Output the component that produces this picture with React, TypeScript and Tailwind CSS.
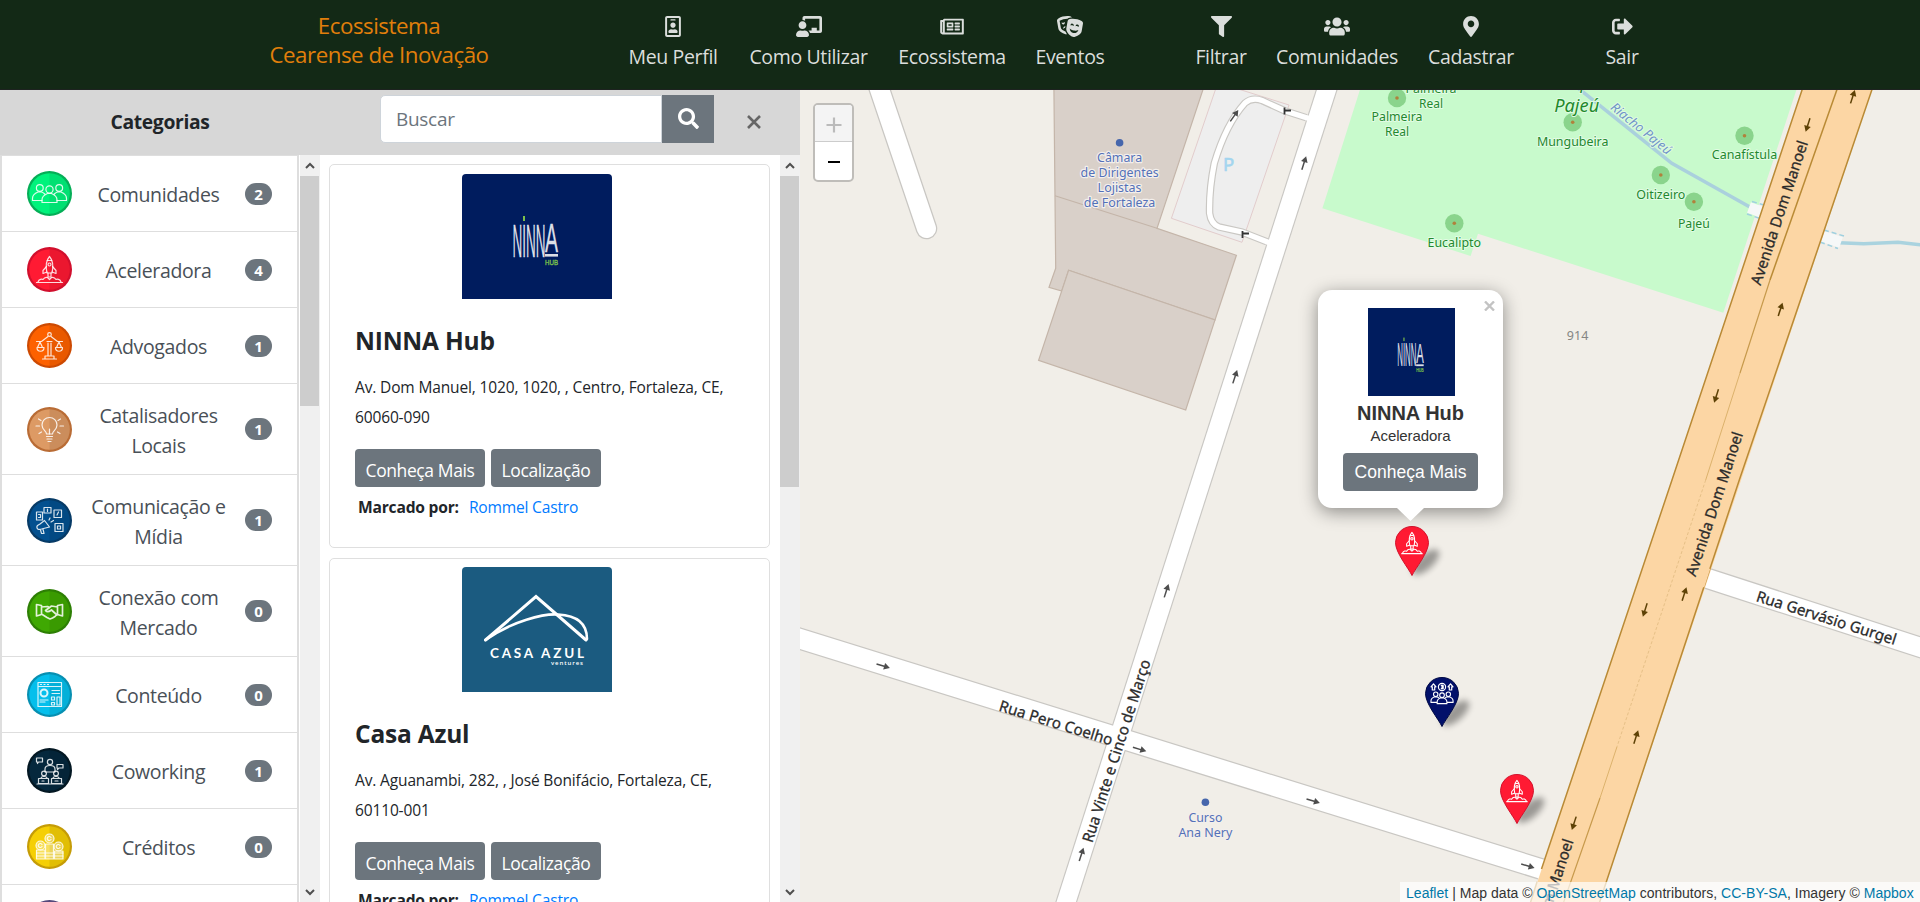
import type { ComponentType, ReactNode } from 'react';
import {
  FaChalkboardTeacher,
  FaFilter,
  FaMapMarkerAlt,
  FaRegIdBadge,
  FaRegNewspaper,
  FaSearch,
  FaSignOutAlt,
  FaTheaterMasks,
  FaUsers,
} from 'react-icons/fa';

type NavItem = { label: string; icon: ComponentType<{ className?: string }>; size: string; box: string };

const navItems: NavItem[] = [
  { label: 'Meu Perfil', icon: FaRegIdBadge, size: 'w-[16px]', box: 'w-[120px]' },
  { label: 'Como Utilizar', icon: FaChalkboardTeacher, size: 'w-[26px]', box: 'w-[151px]' },
  { label: 'Ecossistema', icon: FaRegNewspaper, size: 'w-[24px]', box: 'w-[136px]' },
  { label: 'Eventos', icon: FaTheaterMasks, size: 'w-[26px]', box: 'w-[100px]' },
  { label: 'Filtrar', icon: FaFilter, size: 'w-[21px]', box: 'ml-[61px] w-[80px]' },
  { label: 'Comunidades', icon: FaUsers, size: 'w-[26px]', box: 'w-[152px]' },
  { label: 'Cadastrar', icon: FaMapMarkerAlt, size: 'w-[16px]', box: 'w-[116px]' },
  { label: 'Sair', icon: FaSignOutAlt, size: 'w-[21px]', box: 'ml-[61px] w-[64px]' },
];

function Header() {
  return (
    <header className="flex h-[90px] shrink-0 border-b border-[#1d2320] bg-[#132916] pl-[269px]">
      <div className="flex w-[220px] flex-col items-center pt-[11px] text-[22.300px] leading-[29px] tracking-[-0.470px] text-[#e17f0b]">
        <span>Ecossistema</span>
        <span className="whitespace-nowrap">Cearense de Inovação</span>
      </div>
      <nav className="flex pl-[124px]">
        {navItems.map(({ label, icon: Icon, size, box }) => (
          <a key={label} className={`flex flex-col items-center pt-4 text-[#dbdedc] ${box}`}>
            <Icon className={`h-[21px] ${size}`} />
            <span className="mt-[5px] whitespace-nowrap text-[19.5px] leading-[30px] tracking-[-0.35px]">{label}</span>
          </a>
        ))}
      </nav>
    </header>
  );
}

function Disc({ id, fill, ring, children }: { id: string; fill: string; ring: string; children?: ReactNode }) {
  return (
    <svg viewBox="0 0 45 45" className="h-[45px] w-[45px] shrink-0" fill="none" stroke="#fff" strokeWidth="1.200" strokeOpacity="0.85" strokeLinejoin="round" strokeLinecap="round">
      <clipPath id={id}>
        <rect x="22.5" y="0" width="22.5" height="45" />
      </clipPath>
      <circle cx="22.5" cy="22.5" r="22.5" fill={ring} stroke="none" />
      <circle cx="22.5" cy="22.5" r="20.3" fill={fill} stroke="none" />
      <circle cx="22.5" cy="22.5" r="20.3" fill="#000" fillOpacity="0.08" stroke="none" clipPath={`url(#${id})`} />
      {children}
    </svg>
  );
}

function PeopleGlyph() {
  return (
    <>
      <circle cx="12.8" cy="17" r="3.4" />
      <circle cx="32.2" cy="17" r="3.4" />
      <path d="M15 29.500H5.500v-2c0-3.500 3-5.500 5.500-6.500h3.500c1.500 .5 2.500 1.200 3.200 2" />
      <path d="M30 29.500h9.500v-2c0-3.500-3-5.500-5.500-6.500h-3.500c-1.500 .5-2.500 1.200-3.200 2" />
      <circle cx="22.500" cy="18.500" r="3.600" />
      <path d="M15 31.500v-2.500c0-3.500 3-5.500 5.500-6.500h4c2.500 1 5.500 3 5.500 6.500v2.500z" />
    </>
  );
}

function RocketGlyph() {
  return (
    <>
      <path d="M22.500 9.500c-3.500 4-4 10-2.500 16.500h5c1.500-6.500 1-12.500-2.500-16.500z" />
      <circle cx="22.500" cy="17.500" r="1.500" />
      <path d="M19.500 19.500l-3.500 4v3l4-1.500M25.500 19.500l3.500 4v3l-4-1.500M21 26v4h3v-4M20.200 13.500h4.600" />
      <path d="M9.500 35.500h26M11 35c1-3 4-3 5-2.500 1.500-2.500 3-2.500 4.500-2l2 2 2-2c1.500-.5 3-.5 4.500 2 1-.5 4-.5 5 2.500" />
    </>
  );
}

const categories: { name: string; count: number; tall?: boolean; icon: ReactNode }[] = [
  { name: 'Comunidades', count: 2, icon: <Disc id="c1" fill="#00f37c" ring="#05ae57"><PeopleGlyph /></Disc> },
  { name: 'Aceleradora', count: 4, icon: <Disc id="c2" fill="#ff1a33" ring="#d10f2d"><RocketGlyph /></Disc> },
  {
    name: 'Advogados',
    count: 1,
    icon: (
      <Disc id="c3" fill="#fd6100" ring="#cd4a02">
        <circle cx="22.500" cy="11.500" r="1.800" />
        <path d="M9.500 18.500h5l6.500-5M35.500 18.500h-5l-6.500-5M20 18.500h5M21 20v12.500M24 20v12.500M18 33h9v3h-9zM15.500 36h14" />
        <path d="M13 19l-2.500 5.500M13 19l2.500 5.500M10 24.500h7c0 5-7 5-7 0zM32 19l-2.500 5.500M32 19l2.500 5.500M28.500 24.500h7c0 5-7 5-7 0z" />
      </Disc>
    ),
  },
  {
    name: 'Catalisadores Locais',
    count: 1,
    tall: true,
    icon: (
      <Disc id="c4" fill="#dd9a64" ring="#b96c35">
        <path d="M19.500 27c0-3-4.500-4-4.500-9a7.500 7.500 0 0 1 15 0c0 5-4.500 6-4.500 9z" />
        <path d="M22.500 22v5M19.500 29.500h6M20 32h5M21 34.500h3M9 19h3.500M33 19h3.500M11.500 12l2.500 1.500M33.500 12l-2.500 1.500M12 26.500l2.500-1.500M33 26.500l-2.500-1.500" />
      </Disc>
    ),
  },
  {
    name: 'Comunicação e Mídia',
    count: 1,
    tall: true,
    icon: (
      <Disc id="c5" fill="#03508f" ring="#063a66">
        <path d="M9.500 14h6v8h-6zM17 9.500h7v5.500h-7zM27 12h7.500v7.500h-7.500zM28 25.500h8v8h-8z" />
        <path d="M11.500 16.500h2v3h-2M20.500 11v2.500M31.500 14l-1.500 3M30.500 28h3v3h-3z" />
        <path d="M17.500 22.500l5 6.500-8 2-3 .5a2.500 2.500 0 0 1-1-4l2.500-1.500zM13.500 32l1 3.500h2.500l-1-4.500M22 22l1-2M24 24l2.500-1.500" />
      </Disc>
    ),
  },
  {
    name: 'Conexão com Mercado',
    count: 0,
    tall: true,
    icon: (
      <Disc id="c6" fill="#3fa802" ring="#2d7f04">
        <path strokeWidth="1.700" d="M9.500 15.500l5 1v9l-5 1.500zM35.500 15.500l-5 1v9l5 1.500zM14.500 18l6-.5 2 1M30.500 18l-6-1-6 4.500c1.500 2 4 1 6-.5l5.500 5M14.500 25l5.500 3.500 3 1.500 2.500-1 2.500-1.500 2.500-2.500" />
      </Disc>
    ),
  },
  {
    name: 'Conteúdo',
    count: 0,
    icon: (
      <Disc id="c7" fill="#05bfec" ring="#078fb1">
        <path d="M11 10.500h23.500v24h-23.500zM11 14.500h23.500M13.500 12.500h1M17 12.500h1M20.500 12.500h1M25 18.500h7.500M25 21.500h7.500M13 28h8M13 30h5M24.500 25h3v3h-3zM30 25h3v8h-3zM24.500 30.500h3v2.500h-3z" />
        <circle cx="17" cy="21" r="3.500" strokeWidth="2" />
      </Disc>
    ),
  },
  {
    name: 'Coworking',
    count: 1,
    icon: (
      <Disc id="c8" fill="#05283d" ring="#031722">
        <path d="M9.500 10h6v4h-4l-1 1.500v-1.500h-1zM30 16.500h6v3.500h-4l-1.500 1.500v-1.500h-.5zM18 24v-3c0-2 2-3.500 5-3.500s5 1.500 5 3.500v3z" />
        <circle cx="23" cy="14" r="2.600" />
        <circle cx="17" cy="25.500" r="2.400" />
        <circle cx="29" cy="25.500" r="2.400" />
        <path d="M11.500 35.500v-5h10v5zM24.500 35.500v-5h10v5zM10 36h26M14 30c.500-2 5.500-2 6 0M26 30c.500-2 5.500-2 6 0M15 33h2M28 33h3" />
      </Disc>
    ),
  },
  {
    name: 'Créditos',
    count: 0,
    icon: (
      <Disc id="c9" fill="#f5cf05" ring="#c59c07">
        <g fill="#fff" fillOpacity="0.35">
          <circle cx="22.500" cy="14.500" r="4.500" />
          <circle cx="13.500" cy="21.500" r="4.500" />
          <circle cx="31.500" cy="22.500" r="4.500" />
          <path d="M18.500 20h8v15h-8zM9.500 26h8.500v9h-8.500zM27.500 27h8.500v8h-8.500z" />
        </g>
        <path d="M9.500 29h26.500M9.500 32h26.500M24 13.500a2 2 0 1 0 0 2M15 20.500a2 2 0 1 0 0 2M33 21.500a2 2 0 1 0 0 2" />
      </Disc>
    ),
  },
];

function Chevron({ down }: { down?: boolean }) {
  return (
    <svg viewBox="0 0 10 7" className="h-[7px] w-[10px] shrink-0" fill="none" stroke="#505050" strokeWidth="2">
      <path d={down ? 'M1 1l4 4 4-4' : 'M1 6l4-4 4 4'} />
    </svg>
  );
}

function Scrollbar({ thumb }: { thumb: string }) {
  return (
    <div className="flex w-5 shrink-0 flex-col items-center bg-[#f0f0f0]">
      <div className="flex h-[21px] items-center pr-px">
        <Chevron />
      </div>
      <div className={`w-[19px] self-start bg-[#cdcdcd] ${thumb}`} />
      <div className="mt-auto flex h-[20px] items-center pr-px">
        <Chevron down />
      </div>
    </div>
  );
}

function Sidebar() {
  return (
    <aside className="flex w-[320px] shrink-0 flex-col">
      <div className="flex h-[65px] shrink-0 items-center justify-center bg-[#d7d7d7] text-[19.300px] font-bold tracking-[-0.350px] text-[#212529]">
        Categorias
      </div>
      <div className="flex min-h-0 flex-1">
        <ul className="w-[299px] overflow-hidden border-x-2 border-t border-[#dedede]">
          {categories.map((c) => (
            <li key={c.name} className={`flex items-center border-b border-[#dedede] pl-[25px] ${c.tall ? 'h-[91px]' : 'h-[76px]'}`}>
              {c.icon}
              <span className="mt-[3px] ml-[14px] w-[145px] px-1 text-center text-[19.5px] leading-[30px] tracking-[-0.35px] text-[#495057]">{c.name}</span>
              <span className="ml-[14px] flex h-[22px] w-[27px] items-center justify-center rounded-full bg-[#6c757d] pt-px text-[15px] font-bold text-white">
                {c.count}
              </span>
            </li>
          ))}
          <li className="flex h-[76px] items-start pt-[15px] pl-[25px]">
            <Disc id="c10" fill="#6d5f95" ring="#55487b" />
          </li>
        </ul>
        <div className="flex pl-px">
          <Scrollbar thumb="h-[230px]" />
        </div>
      </div>
    </aside>
  );
}

function NinnaLogo({ className }: { className: string }) {
  return (
    <svg viewBox="0 0 150 125" preserveAspectRatio="none" className={className}>
      <rect width="150" height="125" fill="#001c5e" />
      <g fill="#dcdfe6" stroke="#dcdfe6" strokeWidth="0.300" fontFamily="Liberation Sans, sans-serif">
        <text x="50.500" y="83" fontSize="47" textLength="33" lengthAdjust="spacingAndGlyphs">NINN</text>
        <text x="83" y="77.500" fontSize="40" textLength="13" lengthAdjust="spacingAndGlyphs">A</text>
      </g>
      <rect x="83" y="80" width="13" height="2.600" fill="#dcdfe6" />
      <rect x="61" y="42" width="2" height="5" fill="#7cc04b" />
      <text x="83" y="91" fontSize="6.500" fontFamily="Liberation Sans, sans-serif" textLength="13" lengthAdjust="spacingAndGlyphs" fill="#7cc04b" stroke="#7cc04b" strokeWidth="0.300">HUB</text>
    </svg>
  );
}

function CasaAzulLogo({ className }: { className: string }) {
  return (
    <svg viewBox="0 0 150 125" preserveAspectRatio="none" className={className}>
      <rect width="150" height="125" fill="#1b5b80" />
      <path d="M23.500 73L74 29.500L124 73" fill="none" stroke="#fff" strokeWidth="3" strokeLinecap="round" strokeLinejoin="miter" />
      <path d="M23.500 73C50 54 82 46.500 96 47.500C116 48.500 125 57 125 72" fill="none" stroke="#fff" strokeWidth="2.600" strokeLinecap="round" />
      <text x="28" y="91" fontSize="13.500" fontWeight="700" fontFamily="Lato, sans-serif" textLength="94" fill="#fff">CASA AZUL</text>
      <text x="89" y="97.500" fontSize="6" fontWeight="600" fontFamily="Open Sans, sans-serif" textLength="32" fill="#fff">ventures</text>
    </svg>
  );
}

const cards = [
  { name: 'NINNA Hub', address: 'Av. Dom Manuel, 1020, 1020, , Centro, Fortaleza, CE, 60060-090', logo: NinnaLogo, pad: 'pt-[9px]' },
  { name: 'Casa Azul', address: 'Av. Aguanambi, 282, , José Bonifácio, Fortaleza, CE, 60110-001', logo: CasaAzulLogo, pad: 'pt-[8px]' },
];

function Results() {
  return (
    <section className="flex w-[480px] shrink-0 flex-col">
      <div className="flex h-[65px] shrink-0 items-start bg-[#d7d7d7] pt-[5px] pl-[60px]">
        <div className="flex h-[48px] w-[282px] items-center rounded-l-[5px] border border-[#ced4da] bg-white pt-px pl-[15px] text-[19px] tracking-[-0.3px] text-[#6c757d]">
          Buscar
        </div>
        <button className="flex h-12 w-[52px] items-center justify-center bg-[#6c757d] text-white">
          <FaSearch className="mb-px h-[21px] w-[21px]" />
        </button>
        <button className="mt-[20px] ml-[33px]">
          <svg viewBox="0 0 14 14" className="h-[14px] w-[14px]" stroke="#666" strokeWidth="2.600">
            <path d="M1 1l12 12M13 1L1 13" />
          </svg>
        </button>
      </div>
      <div className="flex min-h-0 flex-1">
        <div className="flex min-w-0 flex-1 flex-col gap-[10px] overflow-hidden bg-white pt-[9px] pr-[10px] pl-[9px] text-[#212529]">
          {cards.map(({ name, address, logo: Logo, pad }) => (
            <article key={name} className={`h-[384px] shrink-0 rounded-[5px] border border-[#dfdfdf] ${pad}`}>
              <Logo className="ml-[132px] h-[125px] w-[150px] rounded-t-[4px]" />
              <div className="pl-[25px]">
                <h2 className="mt-[24px] text-[24.500px] leading-[36px] font-bold tracking-[-0.2px]">{name}</h2>
                <p className="mt-[13px] w-[400px] text-[15.500px] leading-[30px] tracking-[-0.140px]">{address}</p>
                <div className="mt-[17px] flex gap-[6px] text-[17.500px] tracking-[-0.4px] text-white">
                  <button className="h-[38px] w-[130px] rounded-[4px] bg-[#6c757d] pt-[4px]">Conheça Mais</button>
                  <button className="h-[38px] w-[110px] rounded-[4px] bg-[#6c757d] pt-[4px]">Localização</button>
                </div>
                <p className="mt-[8px] flex gap-[10px] pl-[3px] text-[15.600px] leading-[24px] tracking-[-0.200px]">
                  <b>Marcado por:</b>
                  <a className="text-[#007bff]">Rommel Castro</a>
                </p>
              </div>
            </article>
          ))}
        </div>
        <Scrollbar thumb="h-[311px]" />
      </div>
    </section>
  );
}

const trees: [number, number][] = [
  [1397, 98], [1572.7, 122.3], [1744.5, 135.7], [1660.8, 175], [1693.9, 201.7], [1454.3, 223.3],
];

const treeLabels: [number, number, string, number][] = [
  [1431, 92.5, 'Palmeira', 51], [1431, 108, 'Real', 24], [1397, 121, 'Palmeira', 51], [1397, 136, 'Real', 24],
  [1572.7, 146, 'Mungubeira', 71.5], [1744.5, 159, 'Canafístula', 65.5], [1660.8, 198.5, 'Oitizeiro', 49],
  [1693.9, 227.5, 'Pajeú', 32], [1454.3, 247, 'Eucalipto', 53.5],
];

const poiLabels: [number, number, string, number][] = [
  [1119.6, 162, 'Câmara', 45], [1119.6, 177, 'de Dirigentes', 78], [1119.6, 192, 'Lojistas', 44],
  [1119.6, 207, 'de Fortaleza', 71.5], [1205.4, 822, 'Curso', 34], [1205.4, 837, 'Ana Nery', 54],
];

const streetArrows: [number, number, number][] = [
  [1304, 163, -72], [1235, 376.7, -72], [1166.4, 590.7, -72], [1081.4, 854.3, -72], [1329.5, 83, -72],
  [883.2, 666, 17], [1139.6, 749.3, 17], [1313.2, 801, 17], [1527.9, 866, 17], [1234.3, 115.7, -55],
];

const avenueArrows: [number, number, number][] = [
  [1807.8, 125, 108], [1716.3, 396, 108], [1645, 610, 108], [1574, 823.3, 108],
  [1852.7, 96.7, -72], [1780.4, 309.3, -72], [1684.3, 594, -72], [1636, 737, -72],
];

const streetNames: [number, number, number, string, number][] = [
  [1056, 723, 17.2, 'Rua Pero Coelho', 118],
  [1116.5, 751, -72.2, 'Rua Vinte e Cinco de Março', 191],
  [1826.5, 618, 17.6, 'Rua Gervásio Gurgel', 146],
  [1779.5, 212.7, -71.6, 'Avenida Dom Manoel', 151],
  [1714.5, 504, -71.6, 'Avenida Dom Manoel', 151],
  [1545, 911, -71.6, 'Avenida Dom Manoel', 151],
];

function Arrow({ x, y, angle, color }: { x: number; y: number; angle: number; color: string }) {
  return (
    <g transform={`translate(${x} ${y}) rotate(${angle})`}>
      <path d="M-7 0H2" stroke={color} strokeWidth="1.500" />
      <path d="M1-3.400L7 0L1 3.400z" fill={color} />
    </g>
  );
}

function Pin({ x, y, fill, edge, children }: { x: number; y: number; fill: string; edge: string; children: ReactNode }) {
  return (
    <g transform={`translate(${x} ${y})`}>
      <ellipse cx="13.500" cy="-14" rx="17" ry="7.500" transform="rotate(-42 13.500 -14)" fill="#000" opacity="0.36" filter="url(#soft)" />
      <path d="M0-.5C-3.500-8-16.500-23-16.500-33.500a16.500 16 0 0 1 33 0C16.500-23 3.500-8 0-.5z" fill={fill} stroke={edge} strokeWidth="1" />
      {children}
    </g>
  );
}

function RocketPinGlyph() {
  return (
    <g transform="translate(-18.500 -51.500) scale(0.82)" fill="none" stroke="#fff" strokeWidth="1.300" strokeLinejoin="round">
      <RocketGlyph />
    </g>
  );
}

function MapCanvas() {
  return (
    <svg viewBox="800 90 1120 812" className="block h-[812px] w-[1120px]" fill="none">
      <defs>
        <filter id="soft" x="-50%" y="-50%" width="200%" height="200%">
          <feGaussianBlur stdDeviation="3.200" />
        </filter>
      </defs>
      <rect x="800" y="90" width="1120" height="812" fill="#f1eee8" />

      <g fill="#d9d0c9" stroke="#c4b5a9" strokeWidth="1.200">
        <path d="M1053.900 88L1055.700 268.300L1049 287.300L1061.800 291L1068.600 270.300L1215 320L1236.400 255.300L1157 228.300L1203.500 88z" />
        <path d="M1055 195.700L1157 228.300" />
        <path d="M1068.600 270.300L1215 320L1185.700 410L1038.600 360.300z" />
      </g>

      <path d="M1216 88L1171.400 218.300L1242 242.300L1289 105L1235 88z" fill="#eee" stroke="#e2cccc" />

      <path d="M1360.500 88L1322.400 208.300L1470.600 256L1478 233.700L1723.300 312.700L1797 88z" fill="#c8facc" />

      <path d="M1578 88L1671.800 163.300L1749.400 206.700" stroke="#aad0dd" strokeWidth="3.500" />
      <path d="M1839 242.700L1863.700 243.700L1898 242.300L1922 245" stroke="#aad3df" strokeWidth="3.500" />
      <path d="M1749 207.500L1764 213M1822 236L1841 242.500" stroke="#f6f8f8" strokeWidth="11" />
      <path d="M1752 201.500L1764 205M1747 214L1760 218.500M1824 230L1844 236M1820 242L1838 248.500" stroke="#9fd0e0" strokeWidth="1.500" strokeDasharray="5 3" />

      <g strokeLinecap="round">
        <path d="M872 67L926.500 228.500" stroke="#c9c7c3" strokeWidth="21.500" />
        <path d="M872 67L926.500 228.500" stroke="#fff" strokeWidth="19" />
      </g>
      <g stroke="#c9c7c3">
        <path d="M1306.400 117.700L1284.600 110.700L1262 100.500Q1252 97 1245 103Q1226 124 1214.300 163.300Q1209 190 1209.600 213.300Q1211 224 1219 227L1242 232L1266.800 241.700" strokeWidth="7.500" />
        <path d="M1332.400 72L1059.800 922" strokeWidth="20.800" />
        <path d="M780 632.500L1541 869" strokeWidth="22" />
        <path d="M1700 576L1940 653.700" strokeWidth="21.500" />
      </g>
      <g stroke="#fff">
        <path d="M1312 119.500L1284.600 110.700L1262 100.500Q1252 97 1245 103Q1226 124 1214.300 163.300Q1209 190 1209.600 213.300Q1211 224 1219 227L1242 232L1270 243" strokeWidth="5.200" />
        <path d="M1332.400 72L1059.800 922" strokeWidth="18.500" />
        <path d="M780 632.500L1546 870.500" strokeWidth="19.500" />
        <path d="M1700 576L1940 653.700" strokeWidth="19" />
      </g>
      <path d="M1284.500 107.500V114.500M1284.500 110.500H1291M1242.500 231V238M1242.500 233.500H1249" stroke="#333" strokeWidth="1.800" />

      <path d="M1802.700 88L1530 904H1599L1872.500 88z" fill="#fcd6a4" />
      <path d="M1802.700 88L1672 480L1541.500 869M1537 882L1530 904M1872.500 88L1739.300 480L1599 904" stroke="#b98a35" strokeWidth="1.500" />
      <path d="M1709 568.500L1703 587" stroke="#fcd6a4" strokeWidth="2.500" />
      <path d="M1837.500 88L1770 280" stroke="#b98a35" strokeWidth="1.500" />
      <path d="M1770 280L1740 373M1600 798L1563 904" stroke="#c79a4c" strokeWidth="1.200" />
      <path d="M1740 373L1705.700 480M1617 746.700L1600 798" stroke="#dcb26c" strokeWidth="1" />
      <path d="M1705.700 480L1617 746.700" stroke="#e6c087" strokeWidth="1" strokeDasharray="3 2" />

      {streetArrows.map(([x, y, angle]) => (
        <Arrow key={`${x}-${y}`} x={x} y={y} angle={angle} color="#4d4d4d" />
      ))}
      {avenueArrows.map(([x, y, angle]) => (
        <Arrow key={`${x}-${y}`} x={x} y={y} angle={angle} color="#5e4206" />
      ))}

      {trees.map(([x, y]) => (
        <g key={`${x}-${y}`}>
          <circle cx={x} cy={y} r="9.200" fill="#8ad48c" />
          <circle cx={x} cy={y} r="1.800" fill="#b0813c" />
        </g>
      ))}

      <circle cx="1119.600" cy="142.700" r="3.800" fill="#4666ac" />
      <circle cx="1205.400" cy="802.300" r="3.800" fill="#4666ac" />

      <g fontFamily="Noto Sans, sans-serif" textAnchor="middle" strokeLinejoin="round" paintOrder="stroke">
        <g fontSize="13.200" fill="#24882f" stroke="#e3fce5" strokeWidth="2">
          {treeLabels.map(([x, y, label, length]) => (
            <text key={`${x}-${y}`} x={x} y={y} textLength={length} lengthAdjust="spacingAndGlyphs">{label}</text>
          ))}
        </g>
        <g fontSize="18.500" fontStyle="italic" fill="#1f8a2c" stroke="#dffbe1" strokeWidth="2">
          <text x="1576" y="88.500" textLength="56" lengthAdjust="spacingAndGlyphs">Parque</text>
          <text x="1576.700" y="111.500" textLength="45" lengthAdjust="spacingAndGlyphs">Pajeú</text>
        </g>
        <text transform="translate(1641 129) rotate(39)" y="4" fontSize="13" fontStyle="italic" fill="#6f95c8" stroke="#dffbe1" strokeWidth="2" textLength="74" lengthAdjust="spacingAndGlyphs">Riacho Pajeú</text>
        <g fontSize="13.200" fill="#5371b8" stroke="#f3efec" strokeWidth="2.500">
          {poiLabels.map(([x, y, label, length]) => (
            <text key={`${x}-${y}`} x={x} y={y} textLength={length} lengthAdjust="spacingAndGlyphs">{label}</text>
          ))}
        </g>
        <text x="1577.600" y="339.500" fontSize="12.500" fill="#858583" textLength="21.500" lengthAdjust="spacingAndGlyphs">914</text>
        <text x="1228.600" y="170.500" fontSize="18.500" fill="#a3d5ef" stroke="#a3d5ef" strokeWidth="0.600">P</text>
        <g fontSize="15.300" fill="#2b2b2b" stroke="#2b2b2b" strokeWidth="0.300">
          {streetNames.map(([x, y, angle, label, length]) => (
            <text key={`${x}-${y}`} transform={`translate(${x} ${y}) rotate(${angle})`} y="5.200" textLength={length} lengthAdjust="spacingAndGlyphs">{label}</text>
          ))}
        </g>
      </g>

      <Pin x={1412} y={576} fill="#ff1a33" edge="#d3122c"><RocketPinGlyph /></Pin>
      <Pin x={1442} y={727} fill="#02106a" edge="#010a45">
        <g stroke="#fff" strokeWidth="1.200" strokeLinejoin="round">
          <circle cx="0" cy="-40" r="3.600" />
          <path d="M0-42.500V-37.500M-1.200-41.500H1.200V-38.500H-1.200M-9.700-37v-3.200h-1.300l2.500-3 2.500 3h-1.300v3.200zM7.300-37v-3.200h-1.300l2.500-3 2.500 3h-1.300v3.200z" />
          <g transform="translate(-14.600 -43.800) scale(0.650)" strokeWidth="1.700">
            <PeopleGlyph />
          </g>
        </g>
      </Pin>
      <Pin x={1517} y={824} fill="#ff1a33" edge="#d3122c"><RocketPinGlyph /></Pin>
    </svg>
  );
}

function ZoomControl() {
  return (
    <div className="absolute top-[13px] left-[13px] flex h-[79px] w-[41px] flex-col overflow-hidden rounded-[5px] border-2 border-[#bfbdb9] bg-white">
      <button className="flex h-[37px] items-center justify-center border-b border-[#ccc] bg-[#f4f4f4] pt-[3px]">
        <svg viewBox="0 0 16 16" className="h-4 w-4" stroke="#bbb" strokeWidth="2.200"><path d="M8 0.500v15M0.500 8h15" /></svg>
      </button>
      <button className="flex flex-1 items-center justify-center">
        <svg viewBox="0 0 16 16" className="h-4 w-4" stroke="#000" strokeWidth="2"><path d="M2 9h12" /></svg>
      </button>
    </div>
  );
}

function Popup() {
  return (
    <div className="absolute top-[200px] left-[518px] w-[185px] font-['Liberation_Sans',Arial,sans-serif] text-[#333]">
      <div className="relative z-10 flex h-[218px] flex-col items-center rounded-[14px] bg-white pt-[18px] shadow-[0_4px_18px_rgba(0,0,0,0.42)]">
        <NinnaLogo className="ml-[2px] h-[88px] w-[87px]" />
        <h3 className="mt-[5px] text-[20px] leading-6 font-bold">NINNA Hub</h3>
        <p className="mt-[2px] text-[15px] leading-[18px] tracking-[-0.1px]">Aceleradora</p>
        <button className="mt-2 h-[38px] w-[135px] rounded-[4px] bg-[#6c757d] text-[17.500px] text-white">Conheça Mais</button>
        <svg viewBox="0 0 10 10" className="absolute top-[11px] right-[8px] h-[10px] w-[11px]" stroke="#c3c3c3" strokeWidth="2.400">
          <path d="M0.500 0.500l9 9M9.500 0.500l-9 9" />
        </svg>
      </div>
      <svg viewBox="0 0 27 13" className="relative z-20 ml-[79px] h-[13px] w-[27px]" fill="#fff">
        <path d="M0 0H27L13.500 13z" />
      </svg>
    </div>
  );
}

function MapPanel() {
  const link = 'text-[#0078a8]';
  return (
    <main className="relative min-w-0 flex-1 overflow-hidden">
      <MapCanvas />
      <ZoomControl />
      <Popup />
      <div className="absolute right-0 bottom-0 h-[20px] w-[520px] bg-white/70 pt-px pl-[6px] font-['Liberation_Sans',Arial,sans-serif] text-[14px] leading-[20px] tracking-[0.030px] whitespace-nowrap text-[#333]">
        <a className={link}>Leaflet</a> | Map data © <a className={link}>OpenStreetMap</a> contributors, <a className={link}>CC-BY-SA</a>, Imagery © <a className={link}>Mapbox</a>
      </div>
    </main>
  );
}

export default function App() {
  return (
    <div className="flex h-[902px] w-[1920px] flex-col overflow-hidden bg-white font-['Open_Sans','Noto_Sans',sans-serif]">
      <Header />
      <div className="flex min-h-0 flex-1">
        <Sidebar />
        <Results />
        <MapPanel />
      </div>
    </div>
  );
}
